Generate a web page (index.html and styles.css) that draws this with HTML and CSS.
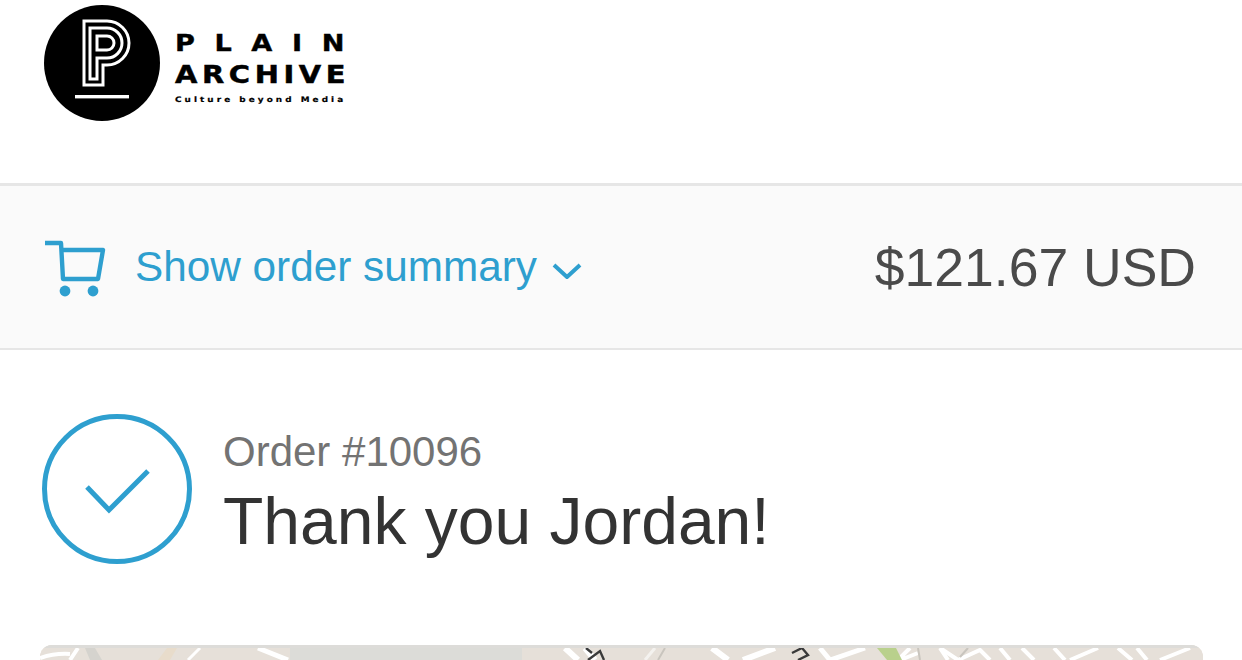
FILE: index.html
```html
<!DOCTYPE html>
<html>
<head>
  <meta charset="utf-8">
  <title>Thank you - Plain Archive</title>
  <link rel="stylesheet" href="styles.css">
</head>
<body>
  <header class="site-header">
    <a class="logo" href="#">
      <svg class="logo-mark" viewBox="44 5 116 116" width="116" height="116">
        <circle cx="102" cy="63" r="58" fill="#000"/>
        <g fill="none" stroke="#fff" stroke-width="3">
          <path d="M103 85H84V21H107A22 22 0 0 1 107 65H103Z"/>
          <path d="M97 79H90V28H107A15 15 0 0 1 107 58H97Z"/>
          <path d="M97 36H107A7 7 0 0 1 107 50H97Z"/>
        </g>
        <rect x="75" y="95" width="54" height="3.4" fill="#fff"/>
      </svg>
      <div class="logo-text">
        <div class="logo-plain">PLAIN</div>
        <div class="logo-archive">ARCHIVE</div>
        <div class="logo-tag">Culture beyond Media</div>
      </div>
    </a>
  </header>

  <section class="summary-bar">
    <a class="summary-toggle" href="#">
      <svg class="cart-icon" viewBox="44 240 62 58" width="62" height="58">
        <path d="M44 243H60L62 279H97L102 250H61" fill="none" stroke="#2e9fcf" stroke-width="4.4" stroke-linejoin="round"/>
        <circle cx="64" cy="291" r="5.4" fill="#2e9fcf"/>
        <circle cx="92" cy="291" r="5.4" fill="#2e9fcf"/>
      </svg>
      <span class="summary-label">Show order summary</span>
      <svg class="chevron" viewBox="0 0 30 16" width="30" height="16">
        <path d="M2 2L15 14L28 2" fill="none" stroke="#2e9fcf" stroke-width="4"/>
      </svg>
    </a>
    <span class="summary-total">$121.67 USD</span>
  </section>

  <main class="content">
    <div class="order-head">
      <svg class="check-circle" viewBox="42 414 150 150" width="150" height="150">
        <circle cx="117" cy="489" r="72.5" fill="none" stroke="#2e9fcf" stroke-width="5"/>
        <path d="M87 487L109 510L148 471" fill="none" stroke="#2e9fcf" stroke-width="5"/>
      </svg>
      <div class="order-title">
        <div class="order-number">Order #10096</div>
        <h1 class="thanks">Thank you Jordan!</h1>
      </div>
    </div>

    <div class="map">
      <svg class="map-tiles" viewBox="0 0 1163 15" width="1163" height="15">
        <rect width="1163" height="15" fill="#e6e0d9"/>
        <rect x="250" width="232" height="15" fill="#dcdcd8"/>
        <polygon points="127,3 137,3 130,15 118,15" fill="#e8dccb"/>
        <polygon points="45,3 55,3 62,15 50,15" fill="#d5d3ce"/>
        <g fill="none" stroke="#fff">
          <path d="M0 13Q15 8 30 9M38 3L30 15" stroke-width="4"/>
          <path d="M160 3L148 15" stroke-width="3"/>
          <path d="M218 3L248 15" stroke-width="5"/>
          <path d="M525 3L538 15M545 3L555 15" stroke-width="6"/>
          <path d="M605 15L615 3" stroke-width="3" stroke="#f4f2ef"/>
          <path d="M672 3L688 15M703 15L735 3" stroke-width="6"/>
          <path d="M780 3L790 15M790 15L825 3" stroke-width="5"/>
          <path d="M858 15L870 3M900 3L908 15M878 8L860 15" stroke-width="4"/>
          <path d="M900 3L918 15M918 15L940 5L950 15M960 3L970 15M982 3L994 15" stroke-width="4"/>
          <path d="M1014 3L1025 15M1030 15L1058 3M1078 3L1092 15M1097 3L1107 15M1120 15L1150 3" stroke-width="4"/>
        </g>
        <g fill="none" stroke="#c9c5be" stroke-width="2">
          <path d="M618 15L625 3M878 3L880 15M928 3L920 12"/>
        </g>
        <polygon points="837,3 856,3 862,15 847,15" fill="#b9d08c"/>
        <path d="M546 3L552 8M548 15L560 6L564 15M752 8L762 3L768 10L758 15" fill="none" stroke="#3a3a3a" stroke-width="2.4"/>
        <rect width="1163" height="3" fill="#dddcd9"/>
      </svg>
    </div>
  </main>
</body>
</html>
```

FILE: styles.css
```css
html {
  overflow: hidden;
}

body {
  margin: 0;
  background: #fff;
  font-family: "Liberation Sans", Arial, sans-serif;
  color: #333;
}

/* Header */
.site-header {
  height: 183px;
  padding: 5px 0 0 44px;
  box-sizing: border-box;
}

.logo {
  display: flex;
  color: #000;
  text-decoration: none;
}

.logo-mark {
  display: block;
  flex: none;
}

.logo-text {
  margin: 27px 0 0 15px;
  font-family: "DejaVu Sans", sans-serif;
  font-weight: 700;
  line-height: 1;
  white-space: nowrap;
  transform: scaleX(1.18);
  transform-origin: left top;
}

.logo-plain {
  font-size: 23px;
  letter-spacing: 16.6px;
  -webkit-text-stroke: 0.4px #000;
}

.logo-archive {
  margin-top: 8px;
  font-size: 24.5px;
  letter-spacing: 3.9px;
  -webkit-text-stroke: 0.5px #000;
}

.logo-tag {
  margin-top: 8px;
  font-size: 7.5px;
  letter-spacing: 2.6px;
  -webkit-text-stroke: 0.2px #000;
}

/* Order summary toggle */
.summary-bar {
  display: flex;
  align-items: center;
  justify-content: space-between;
  height: 167px;
  box-sizing: border-box;
  padding: 0 46px 0 45px;
  background: #fafafa;
  border-top: 3px solid #e6e6e6;
  border-bottom: 2px solid #e6e6e6;
}

.summary-toggle {
  display: flex;
  align-items: center;
  color: #2e9fcf;
  text-decoration: none;
}

.cart-icon {
  display: block;
  flex: none;
  margin: 4px 28px 0 0;
}

.summary-label {
  font-size: 42.3px;
}

.chevron {
  margin: 8px 0 0 15px;
}

.summary-total {
  font-size: 53.5px;
  color: #4a4a4a;
}

/* Main */
.content {
  padding: 64px 39px 0 40px;
}

.order-head {
  display: flex;
  margin-left: 2px;
}

.check-circle {
  display: block;
  flex: none;
  margin-right: 31px;
}

.order-title {
  padding-top: 15px;
}

.order-number {
  font-size: 42px;
  line-height: 46px;
  color: #737373;
}

.thanks {
  margin: 9px 0 0;
  font-size: 66px;
  font-weight: 400;
  line-height: 74px;
  color: #333;
}

.map {
  margin-top: 81px;
  height: 300px;
  border-radius: 12px 12px 0 0;
  overflow: hidden;
  background: #e6e0d9;
}

.map-tiles {
  display: block;
}
```
